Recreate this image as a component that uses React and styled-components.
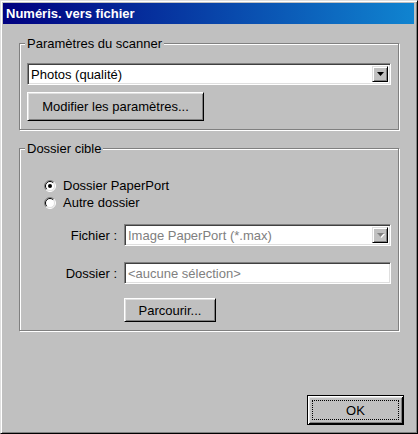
import React from "react";
import styled, { createGlobalStyle } from "styled-components";

const GlobalStyle = createGlobalStyle`
  html, body {
    margin: 0;
    padding: 0;
    background: #c0c0c0;
  }
  body {
    font-family: "Liberation Sans", Arial, sans-serif;
    font-size: 13px;
    color: #000;
  }
`;

const RadioIcon = ({ checked }) => (
  <svg width="12" height="12" viewBox="0 0 12 12">
    <circle cx="6" cy="6" r="5" fill="#fff" />
    <path d="M2.1 9.9 A5.5 5.5 0 0 1 9.9 2.1" stroke="#808080" fill="none" />
    <path d="M9.9 2.1 A5.5 5.5 0 0 1 2.1 9.9" stroke="#fff" fill="none" />
    <path d="M2.8 9.2 A4.5 4.5 0 0 1 9.2 2.8" stroke="#000" fill="none" />
    <path d="M9.2 2.8 A4.5 4.5 0 0 1 2.8 9.2" stroke="#dfdfdf" fill="none" />
    {checked && <circle cx="6" cy="6" r="2" fill="#000" />}
  </svg>
);

const Arrow = ({ disabled }) => (
  <svg width="7" height="4" viewBox="0 0 7 4" style={{ overflow: "visible" }}>
    {disabled && <path d="M1 1h7l-3.5 4z" fill="#fff" />}
    <path d="M0 0h7l-3.5 4z" fill={disabled ? "#808080" : "#000"} />
  </svg>
);

export default function App() {
  return (
    <>
      <GlobalStyle />
      <Window>
        <TitleBar>Numéris. vers fichier</TitleBar>
        <Body>
          <Group>
            <Legend>Paramètres du scanner</Legend>
            <Sunken>
              <FieldText>Photos (qualité)</FieldText>
              <DropButton>
                <Arrow />
              </DropButton>
            </Sunken>
            <Button $width={177} $height={29} $top={7}>
              Modifier les paramètres...
            </Button>
          </Group>

          <Group $gap={11} $pt={21}>
            <Legend>Dossier cible</Legend>
            <RadioList>
              <RadioRow>
                <RadioIcon checked />
                Dossier PaperPort
              </RadioRow>
              <RadioRow>
                <RadioIcon />
                Autre dossier
              </RadioRow>
            </RadioList>
            <FieldRow $top={13}>
              <FieldLabel>Fichier :</FieldLabel>
              <Sunken $grow>
                <FieldText $disabled>Image PaperPort (*.max)</FieldText>
                <DropButton>
                  <Arrow disabled />
                </DropButton>
              </Sunken>
            </FieldRow>
            <FieldRow $top={16}>
              <FieldLabel>Dossier :</FieldLabel>
              <Sunken $grow>
                <FieldText $disabled>&lt;aucune sélection&gt;</FieldText>
              </Sunken>
            </FieldRow>
            <FieldRow $top={14}>
              <FieldLabel />
              <Button $width={92} $height={24}>
                Parcourir...
              </Button>
            </FieldRow>
          </Group>
        </Body>
        <Footer>
          <DefaultButton>
            <FocusRect>OK</FocusRect>
          </DefaultButton>
        </Footer>
      </Window>
    </>
  );
}

const Window = styled.div`
  box-sizing: border-box;
  width: 418px;
  height: 434px;
  display: flex;
  flex-direction: column;
  background: #c0c0c0;
  border: 1px solid;
  border-color: #dfdfdf #000 #000 #dfdfdf;
  box-shadow: inset 1px 1px #fff, inset -1px -1px #808080;
  padding: 2px 3px 2px 2px;
`;

const TitleBar = styled.div`
  height: 21px;
  flex: none;
  display: flex;
  align-items: center;
  padding-left: 3px;
  background: linear-gradient(to right, #000080, #1084d0);
  color: #fff;
  font-weight: bold;
  font-size: 13px;
`;

const Body = styled.div`
  display: flex;
  flex-direction: column;
  padding: 12px 15px 0 16px;
`;

const Group = styled.fieldset`
  margin: ${(p) => p.$gap || 0}px 0 0;
  padding: ${(p) => p.$pt || 12}px 7px 8px 7px;
  border: 1px solid #808080;
  box-shadow: inset 1px 1px #fff, 1px 1px #fff;
  display: flex;
  flex-direction: column;
  align-items: flex-start;
  min-width: 0;
`;

const Legend = styled.legend`
  margin-left: -2px;
  padding: 0 2px;
  line-height: 15px;
  background: #c0c0c0;
`;

const Sunken = styled.div`
  box-sizing: border-box;
  align-self: stretch;
  ${(p) => p.$grow && "flex: 1;"}
  height: 22px;
  display: flex;
  align-items: center;
  background: #fff;
  border: 1px solid;
  border-color: #808080 #fff #fff #808080;
  box-shadow: inset 1px 1px #404040, inset -1px -1px #dfdfdf;
  padding: 2px 2px 2px 3px;
`;

const FieldText = styled.span`
  flex: 1;
  white-space: nowrap;
  overflow: hidden;
  color: ${(p) => (p.$disabled ? "#808080" : "#000")};
`;

const DropButton = styled.span`
  box-sizing: border-box;
  width: 16px;
  height: 16px;
  display: flex;
  align-items: center;
  justify-content: center;
  background: #c0c0c0;
  border: 1px solid;
  border-color: #dfdfdf #000 #000 #dfdfdf;
  box-shadow: inset 1px 1px #fff, inset -1px -1px #808080;
`;

const Button = styled.div`
  box-sizing: border-box;
  width: ${(p) => p.$width}px;
  height: ${(p) => p.$height}px;
  margin-top: ${(p) => p.$top || 0}px;
  display: flex;
  align-items: center;
  justify-content: center;
  background: #c0c0c0;
  border: 1px solid;
  border-color: #fff #000 #000 #fff;
  box-shadow: inset 1px 1px #dfdfdf, inset -1px -1px #808080;
`;

const RadioList = styled.div`
  display: flex;
  flex-direction: column;
  padding-left: 17px;
`;

const RadioRow = styled.label`
  height: 17px;
  display: flex;
  align-items: center;
  gap: 7px;
`;

const FieldRow = styled.div`
  align-self: stretch;
  margin-top: ${(p) => p.$top}px;
  display: flex;
  align-items: center;
  gap: 7px;
`;

const FieldLabel = styled.span`
  width: 90px;
  flex: none;
  text-align: right;
`;

const Footer = styled.div`
  margin-top: auto;
  display: flex;
  justify-content: flex-end;
  padding: 0 10px 6px 0;
`;

const DefaultButton = styled.div`
  box-sizing: border-box;
  width: 97px;
  height: 30px;
  padding: 4px;
  display: flex;
  background: #c0c0c0;
  border: 1px solid #000;
  box-shadow: inset 1px 1px #fff, inset -1px -1px #000, inset 2px 2px #dfdfdf,
    inset -2px -2px #808080;
`;

const FocusRect = styled.div`
  flex: 1;
  display: flex;
  align-items: center;
  justify-content: center;
  border: 1px dotted #000;
`;
